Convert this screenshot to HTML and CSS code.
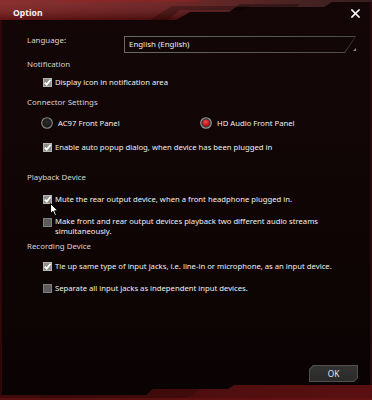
FILE: index.html
```html
<!DOCTYPE html>
<html>
<head>
<meta charset="utf-8">
<link rel="stylesheet" href="styles.css">
</head>
<body>
<div class="win">
  <div class="titlebar">
    <svg class="tb-deco" width="372" height="22" viewBox="0 0 372 22">
      <defs>
        <linearGradient id="tg" x1="0" y1="0" x2="1" y2="0">
          <stop offset="0" stop-color="#7e1818"/>
          <stop offset="0.45" stop-color="#621111"/>
          <stop offset="0.75" stop-color="#3c0a0a"/>
          <stop offset="1" stop-color="#1c0505"/>
        </linearGradient>
        <linearGradient id="tv" x1="0" y1="0" x2="0" y2="1">
          <stop offset="0" stop-color="#ffffff" stop-opacity="0.10"/>
          <stop offset="1" stop-color="#000000" stop-opacity="0.25"/>
        </linearGradient>
      </defs>
      <polygon points="0,0 372,0 372,2 332,2 324,7 236,7 229,12 190,12 176,20 0,20" fill="url(#tg)"/>
      <polygon points="0,0 372,0 372,2 332,2 324,7 236,7 229,12 190,12 176,20 0,20" fill="url(#tv)"/>
      <polygon points="150,20 172,6 250,6 244,10 180,10 168,20" fill="#000" opacity="0.25"/>
      <polygon points="240,4 300,4 296,7 236,7" fill="#000" opacity="0.3"/>
      <polygon points="60,0 200,0 198,2 58,2" fill="#a02020" opacity="0.35"/>
    </svg>
    <span class="title">Option</span>
    <span class="close" aria-label="Close">
      <svg width="9" height="9" viewBox="0 0 9 9"><path d="M1 1 L8 8 M8 1 L1 8" stroke="#fff" stroke-width="1.6" stroke-linecap="square"/></svg>
    </span>
  </div>

  <div class="content">
    <div class="lang-row">
      <span class="label">Language:</span>
      <div class="select-wrap">
        <div class="select"><div class="select-in">English (English)</div></div>
        <span class="grip"></span>
      </div>
    </div>

    <div class="heading h-notif">Notification</div>
    <div class="check r-display">
      <svg class="cb" width="9" height="9" viewBox="0 0 9 9"><rect x="0.5" y="0.5" width="8" height="8" fill="#8e8e8e" stroke="#b4b4b4"/><path d="M1.8 4.6 L3.7 6.6 L7.6 1.8" fill="none" stroke="#fff" stroke-width="1.7"/></svg>
      <span class="opt">Display icon in notification area</span>
    </div>

    <div class="heading h-conn">Connector Settings</div>
    <div class="radio-row">
      <div class="radio r-ac97">
        <svg class="rb" width="12" height="12" viewBox="0 0 12 12"><defs><radialGradient id="rg0" cx="0.5" cy="0.4" r="0.6"><stop offset="0" stop-color="#2c2c2c"/><stop offset="1" stop-color="#121212"/></radialGradient></defs><circle cx="6" cy="6" r="5.3" fill="url(#rg0)" stroke="#8a8a8a" stroke-width="1.1"/></svg>
        <span class="opt">AC97 Front Panel</span>
      </div>
      <div class="radio r-hd">
        <svg class="rb" width="12" height="12" viewBox="0 0 12 12"><defs><radialGradient id="rg1" cx="0.45" cy="0.35" r="0.6"><stop offset="0" stop-color="#ff4a4a"/><stop offset="1" stop-color="#b00c0c"/></radialGradient></defs><circle cx="6" cy="6" r="5.3" fill="#3a3a3a" stroke="#9a9a9a" stroke-width="1.1"/><circle cx="6" cy="6" r="3.4" fill="url(#rg1)"/></svg>
        <span class="opt">HD Audio Front Panel</span>
      </div>
    </div>
    <div class="check r-enable">
      <svg class="cb" width="9" height="9" viewBox="0 0 9 9"><rect x="0.5" y="0.5" width="8" height="8" fill="#8e8e8e" stroke="#b4b4b4"/><path d="M1.8 4.6 L3.7 6.6 L7.6 1.8" fill="none" stroke="#fff" stroke-width="1.7"/></svg>
      <span class="opt">Enable auto popup dialog, when device has been plugged in</span>
    </div>

    <div class="heading h-play">Playback Device</div>
    <div class="check r-mute">
      <svg class="cb" width="9" height="9" viewBox="0 0 9 9"><rect x="0.5" y="0.5" width="8" height="8" fill="#8e8e8e" stroke="#b4b4b4"/><path d="M1.8 4.6 L3.7 6.6 L7.6 1.8" fill="none" stroke="#fff" stroke-width="1.7"/></svg>
      <span class="opt">Mute the rear output device, when a front headphone plugged in.</span>
    </div>
    <div class="check r-make">
      <svg class="cb" width="9" height="9" viewBox="0 0 9 9"><rect x="0.5" y="0.5" width="8" height="8" fill="#5c5c5c" stroke="#7e7e7e"/></svg>
      <span class="opt">Make front and rear output devices playback two different audio streams simultaneously.</span>
    </div>

    <div class="heading h-rec">Recording Device</div>
    <div class="check r-tie">
      <svg class="cb" width="9" height="9" viewBox="0 0 9 9"><rect x="0.5" y="0.5" width="8" height="8" fill="#8e8e8e" stroke="#b4b4b4"/><path d="M1.8 4.6 L3.7 6.6 L7.6 1.8" fill="none" stroke="#fff" stroke-width="1.7"/></svg>
      <span class="opt">Tie up same type of input jacks, i.e. line-in or microphone, as an input device.</span>
    </div>
    <div class="check r-sep">
      <svg class="cb" width="9" height="9" viewBox="0 0 9 9"><rect x="0.5" y="0.5" width="8" height="8" fill="#5c5c5c" stroke="#7e7e7e"/></svg>
      <span class="opt">Separate all input jacks as independent input devices.</span>
    </div>
  </div>

  <div class="footer">
    <div class="ok"><div class="ok-in">OK</div></div>
  </div>

  <svg class="bottom-deco" width="372" height="16" viewBox="0 0 372 16">
    <defs>
      <linearGradient id="bg1" x1="0" y1="0" x2="1" y2="0">
        <stop offset="0" stop-color="#3e0a0a"/>
        <stop offset="0.5" stop-color="#4e0d0d"/>
        <stop offset="1" stop-color="#5a1010"/>
      </linearGradient>
    </defs>
    <polygon points="0,11 146,11 153,5 228,5 234,1 372,1 372,16 0,16" fill="url(#bg1)"/>
    <polygon points="40,11 146,11 153,5 200,5 193,11 180,16 40,16" fill="#000" opacity="0.15"/>
    <rect x="0" y="14" width="372" height="2" fill="#6a1414" opacity="0.6"/>
  </svg>
</div>

<svg class="cursor" width="9" height="14" viewBox="0 0 9 14">
  <path d="M0.5 0.5 L0.5 10.5 L3 8.3 L4.8 12.6 L6.4 11.9 L4.7 7.8 L8 7.8 Z" fill="#fff" stroke="#000" stroke-width="1" stroke-linejoin="miter"/>
</svg>
</body>
</html>
```
FILE: styles.css
```css
* { box-sizing: border-box; }
html, body { margin: 0; padding: 0; }
body {
  width: 372px;
  height: 400px;
  overflow: hidden;
  background: #0c0404;
  font-family: "Noto Sans", "Liberation Sans", sans-serif;
  position: relative;
}
.win {
  width: 372px;
  height: 400px;
  display: flex;
  flex-direction: column;
  background: linear-gradient(to bottom, #140606 0%, #100505 50%, #0a0303 100%);
  box-shadow: inset 2px 0 0 #2e0808, inset -2px 0 0 #2e0808;
}
.titlebar {
  position: relative;
  height: 22px;
  flex: none;
  display: flex;
  align-items: flex-start;
}
.tb-deco { position: absolute; left: 0; top: 0; }
.title {
  position: relative;
  margin: 8px 0 0 13px;
  font-size: 8.6px;
  line-height: 10px;
  font-weight: 700;
  color: #f2f2f2;
}
.close {
  position: relative;
  margin: 9px 12px 0 auto;
  width: 9px;
  height: 9px;
  display: block;
}
.close svg { display: block; }

.content {
  padding: 0 16px 0 27px;
  display: flex;
  flex-direction: column;
  font-size: 7.7px;
  line-height: 10px;
}
.heading { color: #d4d4d4; font-size: 7.9px; }
.opt { color: #f0f0f0; }

.lang-row {
  margin-top: 13px;
  display: flex;
  align-items: flex-start;
}
.label { color: #d6d6d6; width: 97px; flex: none; font-size: 7.9px; }
.select-wrap {
  position: relative;
  margin-top: 1px;
  width: 239px;
  height: 17px;
}
.select {
  height: 17px;
  padding: 1px;
  background: linear-gradient(to right, #6a6a6a 0%, #5a5a5a 50%, #4a4a4a 100%);
  clip-path: polygon(0 0, 100% 0, calc(100% - 11px) 100%, 0 100%);
}
.select-in {
  height: 15px;
  background: #120606;
  clip-path: polygon(0 0, 100% 0, calc(100% - 10.3px) 100%, 0 100%);
  color: #f0f0f0;
  padding-left: 4px;
  line-height: 15px;
  font-size: 7.9px;
}
.grip {
  position: absolute;
  right: 0;
  bottom: 2px;
  width: 0;
  height: 0;
  border-left: 3px solid transparent;
  border-bottom: 3px solid #8a8a8a;
}

.check {
  display: flex;
  align-items: flex-start;
  margin-left: 16px;
}
.cb { flex: none; margin-top: 0.5px; margin-right: 3px; display: block; }

.radio-row { display: flex; margin-top: 10px; height: 12px; align-items: center; }
.radio { display: flex; align-items: center; }
.rb { display: block; flex: none; margin-right: 5px; }
.r-ac97 { margin-left: 14px; width: 159px; }

.h-notif { margin-top: 6px; }
.r-display { margin-top: 8px; }
.h-conn { margin-top: 10px; }
.r-enable { margin-top: 13px; }
.h-play { margin-top: 20px; }
.r-mute { margin-top: 12px; }
.r-make { margin-top: 13px; line-height: 9.5px; }
.r-make .cb { margin-top: 0.5px; }
.h-rec { margin-top: 5px; }
.r-tie { margin-top: 10px; }
.r-sep { margin-top: 12px; }

.footer {
  margin-top: auto;
  display: flex;
  justify-content: flex-end;
  padding: 0 14px 2px 0;
}
.ok {
  width: 49px;
  height: 17px;
  padding: 1px;
  background: #505050;
  clip-path: polygon(4px 0, 100% 0, 100% calc(100% - 4px), calc(100% - 4px) 100%, 0 100%, 0 4px);
}
.ok-in {
  height: 15px;
  background: linear-gradient(to bottom, #333 0%, #2a2a2a 100%);
  clip-path: polygon(3.6px 0, 100% 0, 100% calc(100% - 3.6px), calc(100% - 3.6px) 100%, 0 100%, 0 3.6px);
  color: #e8e8e8;
  font-size: 8.2px;
  line-height: 15px;
  text-align: center;
}
.bottom-deco { display: block; flex: none; }

.cursor {
  position: absolute;
  left: 49.5px;
  top: 202.5px;
}
```
